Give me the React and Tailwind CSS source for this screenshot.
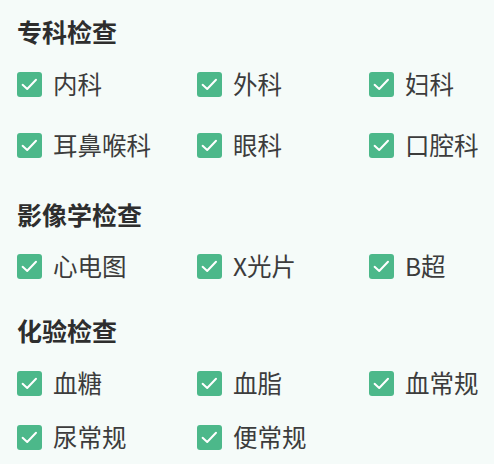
import React from "react";

const Check = () => (
  <span className="flex h-[25px] w-[25px] shrink-0 items-center justify-center rounded-[3px] bg-[#4cb88a]">
    <svg width="25" height="25" viewBox="0 0 25 25" fill="none">
      <path d="M5.6 12.8 L10.2 17 L19 7.8" stroke="#ffffff" strokeWidth="2" strokeLinecap="round" strokeLinejoin="round" />
    </svg>
  </span>
);

const Item = ({ label }) => (
  <div className="flex items-center gap-[11px]">
    <Check />
    <span className="text-[24.5px] leading-none text-[#3c3c3c]">{label}</span>
  </div>
);

const Row = ({ items, className }) => (
  <div className={"grid h-[48px] grid-cols-[180px_172px_1fr] items-center " + className}>
    {items.map((l) => (
      <Item key={l} label={l} />
    ))}
  </div>
);

const Heading = ({ children, className }) => (
  <div className={"flex h-[30px] items-center text-[25px] font-semibold leading-none text-[#2e2e2e] " + className}>
    {children}
  </div>
);

export default function App() {
  return (
    <div
      className="flex min-h-[464px] w-[494px] flex-col bg-[#f5fbf9] pl-[17px] pt-[16px]"
      style={{ fontFamily: '"Noto Sans CJK SC", "Noto Sans", sans-serif' }}
    >
      <Heading>专科检查</Heading>
      <Row className="mt-[14px]" items={["内科", "外科", "妇科"]} />
      <Row className="mt-[13px]" items={["耳鼻喉科", "眼科", "口腔科"]} />
      <Heading className="mt-[30px]">影像学检查</Heading>
      <Row className="mt-[13px]" items={["心电图", "X光片", "B超"]} />
      <Heading className="mt-[25px]">化验检查</Heading>
      <Row className="mt-[14px]" items={["血糖", "血脂", "血常规"]} />
      <Row className="mt-[6px]" items={["尿常规", "便常规"]} />
    </div>
  );
}
